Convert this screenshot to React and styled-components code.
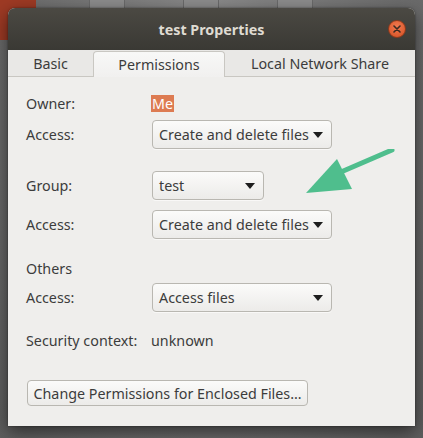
import React from "react";
import styled, { createGlobalStyle } from "styled-components";

const GlobalStyle = createGlobalStyle`
  html, body {
    margin: 0;
    padding: 0;
    background: #6f6f6f;
  }
  body {
    font-family: "Noto Sans", "DejaVu Sans", sans-serif;
    width: 423px;
    height: 438px;
    overflow: hidden;
  }
`;

export default function App() {
  return (
    <>
      <GlobalStyle />
      <Desktop>
        <DesktopIcon />
        <IconStrip>
          <Thumb />
          <Thumb />
          <Thumb />
        </IconStrip>
        <Window>
          <TitleBar>
            <Title>test Properties</Title>
            <CloseButton>
              <svg width="8" height="8" viewBox="0 0 8 8">
                <path d="M1 1L7 7M7 1L1 7" stroke="#3a2a22" strokeWidth="1.6" strokeLinecap="round" />
              </svg>
            </CloseButton>
          </TitleBar>
          <Tabs>
            <Tab $w={85}>Basic</Tab>
            <Tab $w={132} $active>Permissions</Tab>
            <Tab $w={190}>Local Network Share</Tab>
          </Tabs>
          <Content>
            <Row $top={18} $h={17}>
              <Label>Owner:</Label>
              <Highlight>Me</Highlight>
            </Row>
            <Row $top={8}>
              <Label>Access:</Label>
              <Dropdown $w={180}>Create and delete files</Dropdown>
            </Row>
            <Row $top={22}>
              <Label>Group:</Label>
              <Dropdown $w={112}>test</Dropdown>
            </Row>
            <Row $top={10}>
              <Label>Access:</Label>
              <Dropdown $w={180}>Create and delete files</Dropdown>
            </Row>
            <Row $top={21} $h={17}>
              <Label>Others</Label>
            </Row>
            <Row $top={6}>
              <Label>Access:</Label>
              <Dropdown $w={180}>Access files</Dropdown>
            </Row>
            <Row $top={20} $h={17}>
              <Label>Security context:</Label>
              <Value>unknown</Value>
            </Row>
            <ActionButton>Change Permissions for Enclosed Files…</ActionButton>
            <Arrow width="110" height="60" viewBox="0 0 110 60">
              <line x1="100" y1="1" x2="42" y2="26" stroke="#4fbe8d" strokeWidth="5" strokeLinecap="round" />
              <polygon points="14,44 45,10 60,40" fill="#4fbe8d" />
            </Arrow>
          </Content>
        </Window>
      </Desktop>
    </>
  );
}

function Dropdown({ $w, children }) {
  return (
    <Combo $w={$w}>
      <span>{children}</span>
      <Caret />
    </Combo>
  );
}

const Desktop = styled.div`
  position: relative;
  width: 423px;
  height: 438px;
  padding: 8px;
  box-sizing: border-box;
  background: radial-gradient(ellipse at 50% 0%, #8a8a8a 0%, #767676 40%, #5e5e5e 100%);
`;

const DesktopIcon = styled.div`
  position: absolute;
  left: 0;
  top: 0;
  width: 36px;
  height: 40px;
  background: #9e3a24;
`;

const IconStrip = styled.div`
  position: absolute;
  left: 89px;
  top: 0;
  display: flex;
  gap: 58px;
`;

const Thumb = styled.div`
  width: 34px;
  height: 8px;
  border-left: 1px solid #6a6a6a;
  border-right: 1px solid #6a6a6a;
  background: #8c8c8c;
`;

const Window = styled.div`
  position: relative;
  width: 407px;
  height: 418px;
  display: flex;
  flex-direction: column;
  border-radius: 7px 7px 0 0;
  overflow: hidden;
  background: #efeeec;
  box-shadow: 0 6px 18px rgba(0, 0, 0, 0.55), 0 0 2px rgba(0, 0, 0, 0.5);
`;

const TitleBar = styled.div`
  height: 42px;
  flex-shrink: 0;
  display: flex;
  align-items: center;
  justify-content: center;
  position: relative;
  background: linear-gradient(#4b4943, #3a3934);
`;

const Title = styled.div`
  color: #dfdbd2;
  font-size: 14.3px;
  font-weight: bold;
`;

const CloseButton = styled.div`
  position: absolute;
  right: 9px;
  top: 12px;
  width: 16px;
  height: 16px;
  border-radius: 50%;
  display: flex;
  align-items: center;
  justify-content: center;
  background: radial-gradient(circle at 50% 35%, #f07a50, #d44f22);
  border: 1px solid #8e3a1c;
`;

const Tabs = styled.div`
  height: 27px;
  flex-shrink: 0;
  display: flex;
  align-items: flex-end;
  background: #e9e8e6;
  border-bottom: 1px solid #c9c7c2;
  box-sizing: border-box;
`;

const Tab = styled.div`
  width: ${(p) => p.$w}px;
  height: 26px;
  display: flex;
  align-items: center;
  justify-content: center;
  font-size: 14.3px;
  color: #3c3c3c;
  box-sizing: border-box;
  margin-bottom: ${(p) => (p.$active ? "-1px" : "0")};
  background: ${(p) => (p.$active ? "linear-gradient(#f8f8f7, #f1f0ef)" : "transparent")};
  border: ${(p) => (p.$active ? "1px solid #c9c7c2" : "none")};
  border-bottom: none;
  border-radius: 4px 4px 0 0;
`;

const Content = styled.div`
  position: relative;
  flex: 1;
  padding-left: 18px;
  display: flex;
  flex-direction: column;
`;

const Row = styled.div`
  display: grid;
  grid-template-columns: 126px auto;
  align-items: center;
  margin-top: ${(p) => p.$top}px;
  height: ${(p) => p.$h || 29}px;
`;

const Label = styled.div`
  font-size: 14.3px;
  line-height: 17px;
  color: #3c3c3c;
  white-space: nowrap;
`;

const Value = styled.div`
  font-size: 14.3px;
  line-height: 17px;
  color: #3c3c3c;
  margin-left: -1px;
`;

const Highlight = styled.div`
  justify-self: start;
  margin-left: -1px;
  font-size: 14.3px;
  line-height: 17px;
  padding: 0 1px;
  color: #ffffff;
  background: #dd7b52;
`;

const Combo = styled.div`
  width: ${(p) => p.$w}px;
  height: 29px;
  box-sizing: border-box;
  display: flex;
  align-items: center;
  justify-content: space-between;
  padding: 0 8px 0 6px;
  font-size: 14.3px;
  color: #3c3c3c;
  border: 1px solid #b9b7b1;
  border-radius: 4px;
  background: linear-gradient(#fbfbfa, #ecebe9);
  box-shadow: 0 1px 0 rgba(255, 255, 255, 0.6);
  white-space: nowrap;
`;

const Caret = styled.div`
  width: 0;
  height: 0;
  border-left: 5px solid transparent;
  border-right: 5px solid transparent;
  border-top: 6px solid #1e1e1e;
`;

const ActionButton = styled.div`
  align-self: flex-start;
  margin-top: 31px;
  margin-left: 1px;
  width: 281px;
  height: 26px;
  box-sizing: border-box;
  display: flex;
  align-items: center;
  justify-content: center;
  font-size: 14.3px;
  color: #3c3c3c;
  border: 1px solid #b9b7b1;
  border-radius: 4px;
  background: linear-gradient(#fbfbfa, #ecebe9);
  white-space: nowrap;
`;

const Arrow = styled.svg`
  position: absolute;
  left: 284px;
  top: 72px;
`;
